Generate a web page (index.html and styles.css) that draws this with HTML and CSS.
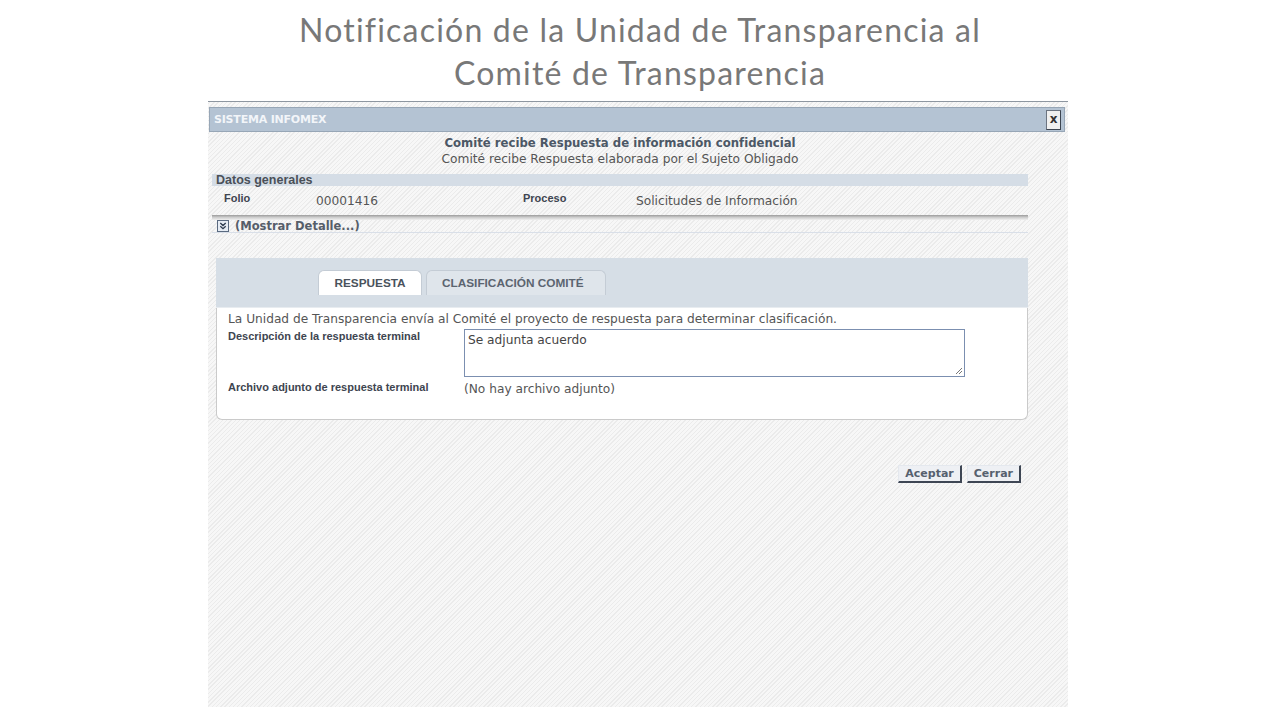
FILE: index.html
```html
<!DOCTYPE html>
<html lang="es">
<head>
<meta charset="utf-8">
<title>Notificación de la Unidad de Transparencia al Comité de Transparencia</title>
<link rel="stylesheet" href="styles.css">
</head>
<body>
<header class="slide-title">
  <h1>Notificación de la Unidad de Transparencia al<br>Comité de Transparencia</h1>
</header>
<main class="frame">
  <div class="winbar">
    <span class="winbar-title">SISTEMA INFOMEX</span>
    <span class="winbar-close">x</span>
  </div>
  <div class="content">
    <div class="heading">
      <div class="heading-main">Comité recibe Respuesta de información confidencial</div>
      <div class="heading-sub">Comité recibe Respuesta elaborada por el Sujeto Obligado</div>
    </div>
    <section class="general">
      <div class="general-title">Datos generales</div>
      <div class="general-row">
        <span class="lbl lbl-folio">Folio</span>
        <span class="val val-folio">00001416</span>
        <span class="lbl lbl-proceso">Proceso</span>
        <span class="val">Solicitudes de Información</span>
      </div>
      <div class="shadow-bar"></div>
      <div class="detail">
        <span class="detail-icon"><svg width="12" height="12" viewBox="0 0 12 12"><rect x="0.5" y="0.5" width="11" height="11" fill="#e6ecf4" stroke="#5a6a80"/><path d="M3.3 3 L6 5.5 L8.7 3 M3.3 6.2 L6 8.7 L8.7 6.2" fill="none" stroke="#2d3a4d" stroke-width="1.3"/></svg></span>
        <span class="detail-text">(Mostrar Detalle...)</span>
      </div>
    </section>
    <section class="tabpanel">
      <div class="tabbar">
        <div class="tab tab-active">RESPUESTA</div>
        <div class="tab tab-second">CLASIFICACIÓN COMITÉ</div>
      </div>
      <div class="tabbody">
        <p class="intro">La Unidad de Transparencia envía al Comité el proyecto de respuesta para determinar clasificación.</p>
        <div class="field">
          <span class="field-lbl">Descripción de la respuesta terminal</span>
          <div class="textarea">Se adjunta acuerdo<svg class="grip" width="9" height="9" viewBox="0 0 9 9"><path d="M8 2 L2 8 M8 5 L5 8" stroke="#777" stroke-width="1"/></svg></div>
        </div>
        <div class="field field-file">
          <span class="field-lbl">Archivo adjunto de respuesta terminal</span>
          <span class="field-val">(No hay archivo adjunto)</span>
        </div>
      </div>
    </section>
    <div class="actions">
      <span class="btn">Aceptar</span>
      <span class="btn">Cerrar</span>
    </div>
  </div>
</main>
</body>
</html>
```
FILE: styles.css
```css
html, body {
  margin: 0;
  padding: 0;
  background: #ffffff;
}
body {
  width: 1280px;
  height: 720px;
  overflow: hidden;
}
.slide-title {
  height: 101px;
  display: flex;
  justify-content: center;
}
.slide-title h1 {
  margin: 8px 0 0;
  font-family: "Lato", "Open Sans", sans-serif;
  font-weight: 400;
  font-size: 32px;
  letter-spacing: 1.2px;
  line-height: 43px;
  color: #787878;
  text-align: center;
}
.frame {
  margin-left: 208px;
  width: 860px;
  height: 606px;
  border-top: 1px solid #8d96a0;
  background-color: #f3f3f3;
  background-image: repeating-linear-gradient(135deg, #f7f7f7 0 1px, #ebebeb 1px 2px, #f7f7f7 2px 3px);
  font-family: "DejaVu Sans", Verdana, sans-serif;
  color: #555;
  box-sizing: border-box;
  padding-top: 5px;
}
.winbar {
  margin: 0 3px 0 1px;
  height: 25px;
  background: #b4c3d3;
  border: 1px solid #97a6b6;
  box-sizing: border-box;
  display: flex;
  align-items: center;
  justify-content: space-between;
  padding: 0 3px 0 4px;
}
.winbar-title {
  font-family: "DejaVu Sans", sans-serif;
  font-weight: 700;
  font-size: 11px;
  color: #f2f5f9;
  letter-spacing: -0.2px;
}
.winbar-close {
  width: 13px;
  height: 18px;
  background: #f0f0f0;
  border: 1px solid #6c7480;
  border-right-color: #3c4450;
  border-bottom-color: #3c4450;
  font-family: "DejaVu Sans", sans-serif;
  font-weight: 700;
  font-size: 12px;
  line-height: 16px;
  color: #333;
  text-align: center;
}
.content {
  padding: 0 40px 0 4px;
}
.heading {
  text-align: center;
  padding-top: 3px;
  height: 42px;
  box-sizing: border-box;
}
.heading-main {
  font-weight: 700;
  font-size: 11.7px;
  line-height: 16px;
  color: #4c5866;
}
.heading-sub {
  font-size: 12.2px;
  line-height: 16px;
  color: #555;
}
.general-title {
  height: 12px;
  background: #d5dde6;
  font-family: "Liberation Sans", Arial, sans-serif;
  font-weight: 700;
  font-size: 12.5px;
  line-height: 12px;
  color: #4a5058;
  padding-left: 4px;
}
.general-row {
  height: 29px;
  display: grid;
  grid-template-columns: 12px 92px 207px 113px 1fr;
  align-items: center;
}
.general-row > :first-child { grid-column: 2; }
.lbl {
  font-family: "Liberation Sans", Arial, sans-serif;
  font-weight: 700;
  font-size: 11px;
  color: #3e4550;
  align-self: start;
  padding-top: 6px;
}
.val {
  font-size: 12.2px;
  color: #555;
}
.val-folio { padding-top: 1px; }
.shadow-bar {
  height: 5px;
  background: linear-gradient(#9b9b9b, #cfcfcf 50%, #efefef);
}
.detail {
  height: 13px;
  margin-top: -1px;
  display: flex;
  align-items: center;
  gap: 6px;
  padding-left: 5px;
  border-bottom: 1px solid #d9dfe8;
}
.detail-icon { display: flex; }
.detail-text {
  font-weight: 700;
  font-size: 11.5px;
  color: #565e6a;
}
.tabpanel {
  margin: 25px 0 0 4px;
  width: 812px;
}
.tabbar {
  height: 50px;
  background: #d6dee6;
  display: flex;
  align-items: flex-start;
  gap: 4px;
  padding: 12px 0 0 102px;
  box-sizing: border-box;
  border-bottom: 1px solid #e8ecf0;
}
.tab {
  height: 25px;
  box-sizing: border-box;
  border: 1px solid #c4ccd5;
  border-bottom: none;
  border-radius: 6px 6px 0 0;
  background: #dfe5eb;
  font-family: "Liberation Sans", Arial, sans-serif;
  font-weight: 700;
  font-size: 11.8px;
  line-height: 25px;
  color: #5b6470;
  text-align: center;
}
.tab-active {
  background: #ffffff;
  color: #4a525c;
  width: 104px;
}
.tab-second {
  width: 180px;
  text-align: left;
  padding-left: 15px;
}
.tabbody {
  height: 112px;
  background: #ffffff;
  border: 1px solid #cacaca;
  border-top: none;
  border-radius: 0 0 6px 6px;
  box-sizing: border-box;
  padding: 4px 0 0 11px;
}
.intro {
  margin: 0;
  font-size: 12.2px;
  line-height: 14px;
  color: #555;
}
.field {
  display: flex;
  align-items: flex-start;
  margin-top: 3px;
}
.field-lbl {
  width: 236px;
  font-family: "Liberation Sans", Arial, sans-serif;
  font-weight: 700;
  font-size: 11px;
  line-height: 14px;
  color: #3e4550;
}
.textarea {
  position: relative;
  width: 501px;
  height: 48px;
  box-sizing: border-box;
  border: 1px solid #7b8fb0;
  padding: 3px 3px;
  font-size: 12.2px;
  line-height: 15px;
  color: #444;
  background: #fff;
}
.grip {
  position: absolute;
  right: 1px;
  bottom: 1px;
}
.field-file {
  margin-top: 3px;
}
.field-lbl + .field-val { padding-top: 1px; }
.field-val {
  font-size: 12.2px;
  line-height: 16px;
  color: #555;
}
.actions {
  margin-top: 45px;
  width: 816px;
  display: flex;
  justify-content: flex-end;
  gap: 5px;
  padding-right: 7px;
  box-sizing: border-box;
}
.btn {
  height: 18px;
  box-sizing: border-box;
  background: #eef0f4;
  border: 1px solid #e4e8ee;
  border-right: 2px solid #3e4654;
  border-bottom: 2px solid #3e4654;
  font-family: "DejaVu Sans", sans-serif;
  font-weight: 700;
  font-size: 11px;
  line-height: 15px;
  color: #56606e;
  padding: 0 6px;
}
```
